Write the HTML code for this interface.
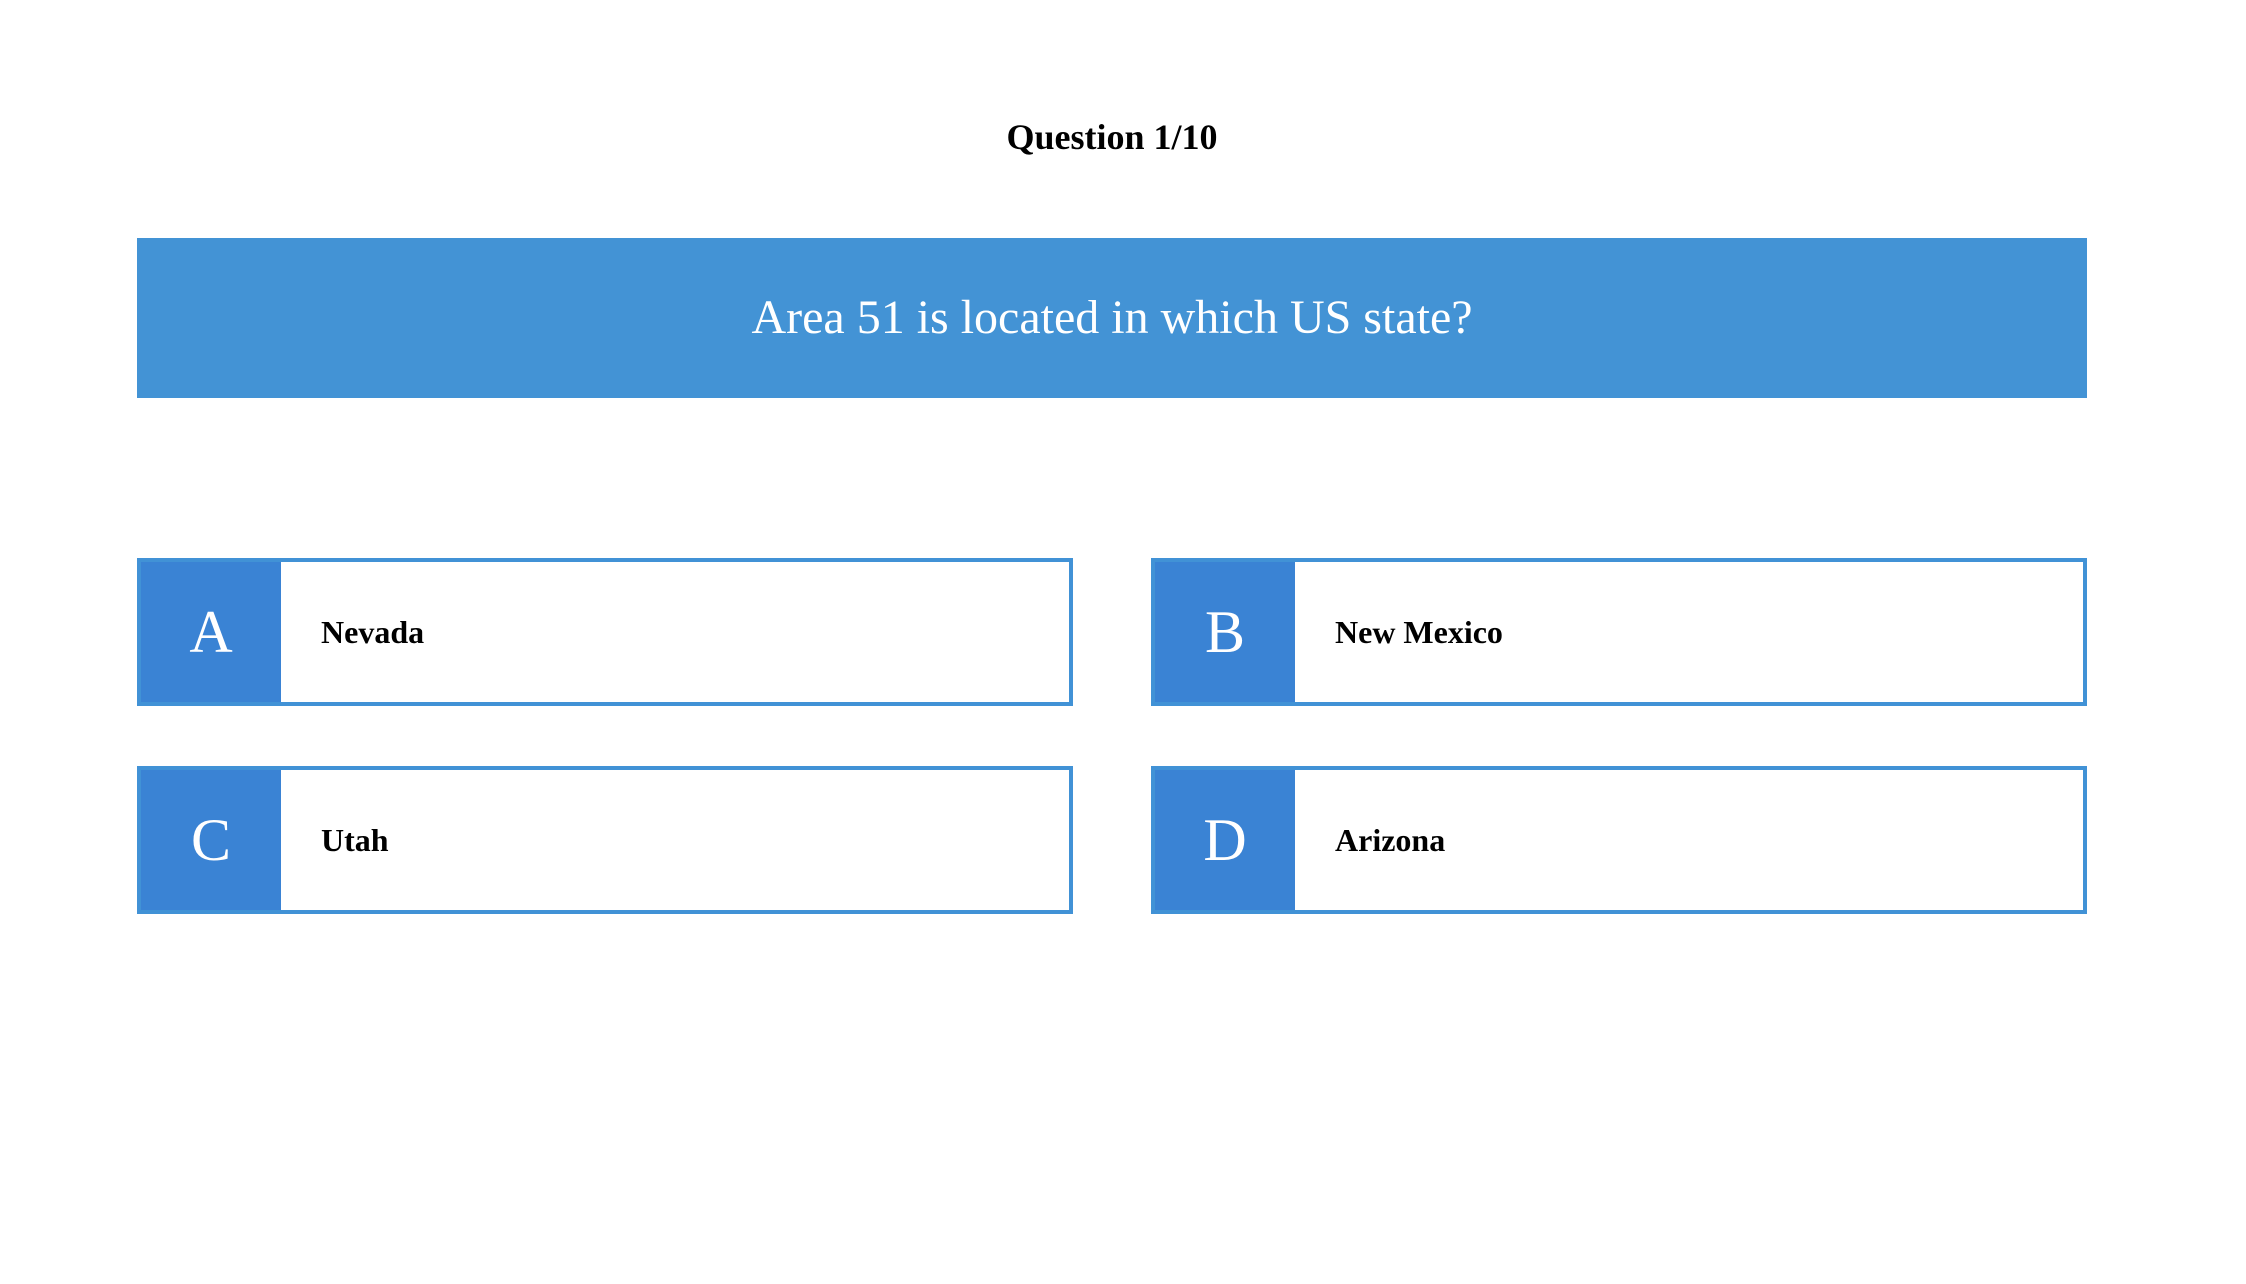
<!DOCTYPE html>
<html><head><meta charset="utf-8"><style>
html,body{margin:0;padding:0;background:#fff;width:2246px;height:1284px;overflow:hidden;font-family:"Liberation Serif",serif}
.title{position:absolute;left:137px;width:1950px;top:112px;text-align:center;font-weight:bold;font-size:36px;line-height:50px;color:#000}
.banner{position:absolute;left:137px;top:238px;width:1950px;height:160px;background:#4393d5;color:#fff;font-size:48px;text-align:center;line-height:160px}
.opt{position:absolute;width:928px;height:140px;border:4px solid #4192d6;background:#fff}
.opt .l{position:absolute;left:0;top:0;width:140px;height:140px;background:#3a83d4;color:#fff;font-size:60px;text-align:center;line-height:140px}
.opt .t{position:absolute;left:180px;top:0;line-height:140px;font-size:32px;font-weight:bold;color:#000}
</style></head><body>
<div class="title">Question 1/10</div>
<div class="banner">Area 51 is located in which US state?</div>
<div class="opt" style="left:137px;top:558px"><div class="l">A</div><div class="t">Nevada</div></div>
<div class="opt" style="left:1151px;top:558px"><div class="l">B</div><div class="t">New Mexico</div></div>
<div class="opt" style="left:137px;top:766px"><div class="l">C</div><div class="t">Utah</div></div>
<div class="opt" style="left:1151px;top:766px"><div class="l">D</div><div class="t">Arizona</div></div>
</body></html>
